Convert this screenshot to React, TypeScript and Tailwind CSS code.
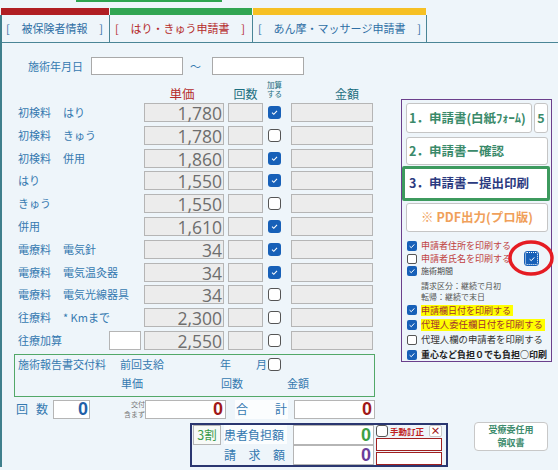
import React from "react";

function Cb({ on }: { on: boolean }) {
  return on ? (
    <div className="w-[13px] h-[13px] shrink-0 rounded-[3px] bg-[#1760b8] flex items-center justify-center">
      <svg width="9" height="9" viewBox="0 0 9 9">
        <path d="M2 4.7 L3.8 6.3 L7 2.9" fill="none" stroke="white" strokeWidth="1.1" />
      </svg>
    </div>
  ) : (
    <div className="w-[13px] h-[13px] shrink-0 rounded-[3px] bg-white border border-[#555]" />
  );
}

function SCb({ on }: { on: boolean }) {
  return on ? (
    <div className="w-[10px] h-[10px] shrink-0 rounded-[2px] bg-[#1760b8] flex items-center justify-center">
      <svg width="8" height="8" viewBox="0 0 8 8">
        <path d="M1.6 4.2 L3.3 5.7 L6.3 2.4" fill="none" stroke="white" strokeWidth="1" />
      </svg>
    </div>
  ) : (
    <div className="w-[10px] h-[10px] shrink-0 rounded-[2px] bg-white border border-[#555]" />
  );
}

const rows = [
  { a: "初検料", b: "はり", price: "1,780", on: true },
  { a: "初検料", b: "きゅう", price: "1,780", on: false },
  { a: "初検料", b: "併用", price: "1,860", on: true },
  { a: "はり", b: "", price: "1,550", on: true },
  { a: "きゅう", b: "", price: "1,550", on: false },
  { a: "併用", b: "", price: "1,610", on: true },
  { a: "電療料", b: "電気針", price: "34", on: true },
  { a: "電療料", b: "電気温灸器", price: "34", on: true },
  { a: "電療料", b: "電気光線器具", price: "34", on: false },
  { a: "往療料", b: "* Kmまで", price: "2,300", on: false },
  { a: "往療加算", b: "", price: "2,550", on: false, extra: true },
];

export default function App() {
  return (
    <div className="w-[558px] h-[470px] bg-[#eef5fa] overflow-hidden relative font-['Noto_Sans_CJK_JP',sans-serif] text-[11px] leading-none">
      {/* top strip */}
      <div className="ml-[76px] w-[146px] h-[2px] bg-[#2ea44f]" />
      <div className="h-[6px]" />
      <div className="flex h-[7px]">
        <div className="ml-[1px] w-[108px] bg-[#b01e23]" />
        <div className="ml-[1px] w-[142px] bg-[#31a552]" />
        <div className="ml-[1px] w-[173px] bg-[#f6c024]" />
      </div>

      <div className="border-l-2 border-[#3f7f8c]">
        {/* tabs */}
        <div className="flex h-[28px] border-b border-[#4a8596]">
          <div className="w-[108px] border-r border-[#4a8596] flex items-center justify-between pl-[4px] pr-[6px] text-[#2f6fa5]">
            <span>[</span>
            <span>被保険者情報</span>
            <span>]</span>
          </div>
          <div className="w-[143px] border-r border-[#4a8596] flex items-center justify-between pl-[5px] pr-[7px] text-[#b52a2a]">
            <span>[</span>
            <span>はり・きゅう申請書</span>
            <span>]</span>
          </div>
          <div className="w-[174px] border-r border-[#4a8596] flex items-center justify-between pl-[5px] pr-[5px] text-[#2f6fa5]">
            <span>[</span>
            <span>あん摩・マッサージ申請書</span>
            <span>]</span>
          </div>
        </div>

        {/* upper content */}
        <div className="flex items-start">
          <div className="w-[399px] pt-[14px]">
            {/* date row */}
            <div className="flex items-center h-[18px]">
              <span className="ml-[26px] w-[63px] text-[#3579b0]">施術年月日</span>
              <div className="w-[92px] h-[18px] bg-white border border-[#a9a9a9]" />
              <span className="ml-[7px] w-[22px] text-[#3579b0]">～</span>
              <div className="w-[92px] h-[18px] bg-white border border-[#a9a9a9]" />
            </div>

            {/* header row */}
            <div className="flex items-end h-[20px] mt-[5px]">
              <div className="w-[142px]" />
              <div className="w-[80px] flex justify-center pr-[4px] text-[12.5px] text-[#b52a2a]">単価</div>
              <div className="ml-[4px] w-[35px] flex justify-center text-[12px] text-[#1d6f80]">回数</div>
              <div className="ml-[5px] w-[13px] flex flex-col items-center text-[7.5px] text-[#1d6f80] self-start leading-[9px]">
                <span className="whitespace-nowrap">加算</span>
                <span className="whitespace-nowrap">する</span>
              </div>
              <div className="ml-[54px] text-[12px] text-[#1d6f80]">金額</div>
            </div>

            {/* rows */}
            <div className="flex flex-col gap-[3.8px] mt-[3px]">
              {rows.map((r, i) => (
                <div key={i} className="flex items-center h-[19px]">
                  <div className="w-[142px] h-full flex items-center pl-[16px] text-[#3579b0] whitespace-nowrap">
                    {r.b ? (
                      <>
                        <span className="w-[45px]">{r.a}</span>
                        <span>{r.b}</span>
                      </>
                    ) : (
                      <span>{r.a}</span>
                    )}
                    {r.extra && <div className="ml-auto mr-[3px] w-[32px] h-[19px] bg-white border border-[#b5b5b5]" />}
                  </div>
                  <div className="w-[80px] h-full bg-[#ececec] border border-[#b5b5b5] flex items-end justify-end pr-[1px]">
                    <span className="font-['Open_Sans',sans-serif] text-[17.5px] leading-[15px] text-[#6e6e6e]">{r.price}</span>
                  </div>
                  <div className="ml-[4px] w-[35px] h-full bg-[#ececec] border border-[#b5b5b5]" />
                  <div className="ml-[5px]">
                    <Cb on={r.on} />
                  </div>
                  <div className="ml-[10px] w-[82px] h-full bg-[#ececec] border border-[#b5b5b5]" />
                </div>
              ))}
            </div>

            {/* green box */}
            <div className="mt-[4px] ml-[12px] w-[361px] h-[43px] border border-[#52a868] pt-[3px] text-[#3579b0]">
              <div className="flex items-center h-[13px]">
                <span className="w-[105px] pl-[3px] whitespace-nowrap">施術報告書交付料</span>
                <span className="w-[100px]">前回支給</span>
                <span className="w-[36px]">年</span>
                <span className="w-[12px]">月</span>
                <Cb on={false} />
              </div>
              <div className="flex items-center h-[13px] mt-[6px]">
                <span className="w-[106px]" />
                <span className="w-[100px]">単価</span>
                <span className="w-[66px]">回数</span>
                <span>金額</span>
              </div>
            </div>
          </div>

          {/* right panel */}
          <div className="mt-[56px] w-[151px] h-[263px] border border-[#6b3f8c] flex flex-col">
            <div className="flex mt-[3px]">
              <div className="ml-[4px] w-[126px] h-[30px] bg-white border border-[#c5c5c5] rounded-[3px] flex items-center pl-[2px] text-[12.5px] font-bold text-[#3a8a6a] whitespace-nowrap">
                1．申請書(白紙ﾌｫｰﾑ)
              </div>
              <div className="ml-[2px] w-[14px] h-[30px] bg-white border border-[#c5c5c5] rounded-[3px] flex items-center justify-center text-[12.5px] font-bold text-[#3a8a6a]">
                5
              </div>
            </div>
            <div className="mt-[4px] ml-[4px] w-[142px] h-[28px] bg-white border border-[#c5c5c5] rounded-[3px] flex items-center pl-[2px] text-[12.5px] font-bold text-[#3a8a6a] whitespace-nowrap">
              2．申請書ー確認
            </div>
            <div className="mt-[1px] w-[148px] h-[35px] bg-white border-[3px] border-[#3d9a5e] rounded-[2px] flex items-center pl-[4px] text-[12.5px] font-bold text-[#2b3a80] whitespace-nowrap">
              3．申請書ー提出印刷
            </div>
            <div className="mt-[2px] ml-[4px] w-[142px] h-[29px] bg-white border border-[#c5c5c5] rounded-[3px] flex items-center justify-center text-[12.5px] font-bold text-[#f0a05a] whitespace-nowrap">
              ※ PDF出力(プロ版)
            </div>

            <div className="flex flex-col pl-[5px] text-[9px] whitespace-nowrap">
              <div className="flex items-center h-[11px] mt-[8px] gap-[4px]">
                <SCb on={true} />
                <span className="text-[#c04040]">申請者住所を印刷する</span>
              </div>
              <div className="flex items-center h-[13px] mt-[1px] gap-[4px]">
                <SCb on={false} />
                <span className="text-[#c04040]">申請者氏名を印刷する</span>
                <div className="ml-auto mr-[13px] w-[13px] h-[13px] rounded-[2px] bg-[#1760b8] flex items-center justify-center border border-dotted border-white outline outline-1 outline-[#1760b8]">
                  <svg width="8" height="8" viewBox="0 0 8 8">
                    <path d="M1.6 4.2 L3.3 5.7 L6.3 2.4" fill="none" stroke="white" strokeWidth="1" />
                  </svg>
                </div>
              </div>
              <div className="flex items-center h-[10px] mt-[1px] gap-[4px]">
                <SCb on={true} />
                <span className="text-[8px] text-[#444]">施術期間</span>
              </div>
              <div className="h-[10px] mt-[5px] pl-[14px] flex items-center text-[8px] text-[#555]">請求区分：継続で月初</div>
              <div className="h-[10px] mt-[1px] pl-[14px] flex items-center text-[8px] text-[#555]">転帰：継続で末日</div>
              <div className="flex items-center h-[12px] mt-[2px] gap-[4px]">
                <SCb on={true} />
                <span className="bg-[#ffff00] h-[11px] w-[92px] flex items-center text-[#a03030]">申請欄日付を印刷する</span>
              </div>
              <div className="flex items-center h-[12px] mt-[3px] gap-[4px]">
                <SCb on={true} />
                <span className="bg-[#ffff00] h-[12px] w-[124px] flex items-center text-[9.4px] text-[#a03030]">代理人委任欄日付を印刷する</span>
              </div>
              <div className="flex items-center h-[12px] mt-[3px] gap-[4px]">
                <SCb on={false} />
                <span className="text-[9.4px] text-[#333]">代理人欄の申請者を印刷する</span>
              </div>
              <div className="flex items-center h-[11px] mt-[3px] gap-[4px]">
                <SCb on={true} />
                <span className="text-[#222] font-bold">重心など負担０でも負担○印刷</span>
              </div>
            </div>
          </div>
        </div>

        {/* 回数 row */}
        <div className="flex items-center h-[19px] mt-[3px]">
          <span className="ml-[14px] text-[12px] text-[#3579b0]">回</span>
          <span className="ml-[8px] text-[12px] text-[#3579b0]">数</span>
          <div className="ml-[5px] w-[37px] h-[19px] bg-white border border-[#b5b5b5] flex items-center justify-end pr-[1px]">
            <span className="font-['Liberation_Sans',Arial,sans-serif] font-bold text-[18px] text-[#1f5fa8]">0</span>
          </div>
          <div className="ml-[29px] w-[26px] flex flex-col items-end text-[7px] leading-[10px] text-[#777] whitespace-nowrap">
            <span>交付</span>
            <span>含まず</span>
          </div>
          <div className="w-[81px] h-[19px] bg-white border border-[#b5b5b5] flex items-center justify-end pr-[2px]">
            <span className="font-['Liberation_Sans',Arial,sans-serif] font-bold text-[18px] text-[#a01818]">0</span>
          </div>
          <div className="ml-[9px] w-[53px] h-[19px] bg-[#fbfdfe] flex items-center justify-between px-[1px] text-[12px] text-[#3579b0]">
            <span>合</span>
            <span>計</span>
          </div>
          <div className="ml-[6px] w-[81px] h-[19px] bg-white border border-[#b5b5b5] flex items-center justify-end pr-[2px]">
            <span className="font-['Liberation_Sans',Arial,sans-serif] font-bold text-[18px] text-[#a01818]">0</span>
          </div>
        </div>

        {/* navy row */}
        <div className="flex items-start mt-[4px]">
          <div className="ml-[188px] w-[258px] h-[44px] border-2 border-[#2a3670] flex">
            <div className="ml-[1px] w-[28px] h-[20px] border border-[#b5b5b5] bg-[#f7faf7] flex items-center justify-center text-[12.5px] text-[#3a9a4a]">
              3割
            </div>
            <div className="ml-[3px] flex flex-col">
              <div className="flex h-[20px] items-center">
                <div className="w-[63px] h-[19px] bg-[#fbfdfe] flex items-center text-[12px] text-[#3579b0] whitespace-nowrap">患者負担額</div>
                <div className="ml-[6px] w-[81px] h-[20px] bg-white border border-[#b5b5b5] flex items-center justify-end pr-[2px]">
                  <span className="font-['Liberation_Sans',Arial,sans-serif] font-bold text-[18px] text-[#3da045]">0</span>
                </div>
              </div>
              <div className="flex h-[20px] items-center">
                <div className="w-[63px] h-[19px] flex items-center justify-between pr-[2px] text-[12px] text-[#3579b0]">
                  <span>請</span>
                  <span>求</span>
                  <span>額</span>
                </div>
                <div className="ml-[6px] w-[81px] h-[20px] bg-white border border-[#b5b5b5] flex items-center justify-end pr-[2px]">
                  <span className="font-['Liberation_Sans',Arial,sans-serif] font-bold text-[18px] text-[#6a3d9a]">0</span>
                </div>
              </div>
            </div>
            <div className="ml-[2px] flex flex-col w-[68px]">
              <div className="flex items-center h-[12px]">
                <div className="w-[12px] h-[12px] rounded-[3px] bg-white border border-[#555]" />
                <span className="ml-[2px] text-[8.5px] font-bold text-[#c02020] whitespace-nowrap">手動訂正</span>
                <div className="ml-auto mr-[2px] w-[13px] h-[12px] bg-white border border-[#c8c8c8] rounded-[2px] flex items-center justify-center text-[10px] font-bold text-[#a01818] leading-none">
                  ×
                </div>
              </div>
              <div className="mt-[1px] w-[66px] h-[13px] bg-white border border-[#a02020]" />
              <div className="mt-[1px] w-[66px] h-[13px] bg-white border border-[#a02020]" />
            </div>
          </div>
          <div className="ml-[26px] -mt-[1px] w-[74px] h-[29px] bg-white border border-[#c8c8c8] rounded-[4px] flex flex-col items-center justify-center gap-[4px] text-[9px] font-bold text-[#3d8b6d]">
            <span>受療委任用</span>
            <span>領収書</span>
          </div>
        </div>
      </div>

      {/* red circle annotation */}
      <svg className="absolute left-[507px] top-[239px]" width="48" height="38" viewBox="0 0 48 38">
        <ellipse cx="24" cy="19" rx="21" ry="16" fill="none" stroke="#e51c23" strokeWidth="3.5" />
      </svg>
    </div>
  );
}
